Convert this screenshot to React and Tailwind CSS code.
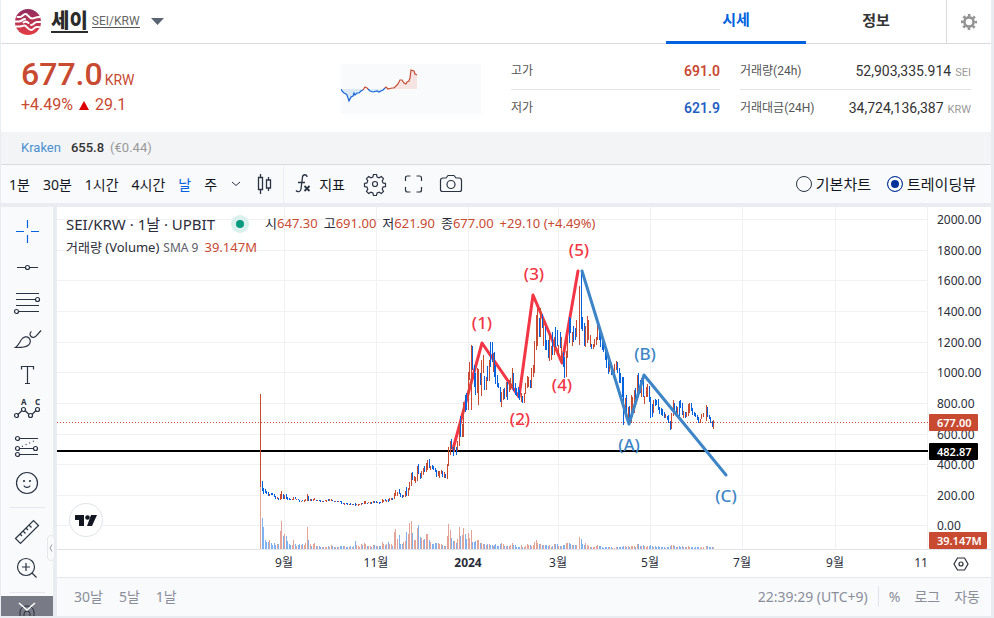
import React, { useState } from 'react'

const UP = '#c84a31'
const DOWN = '#0062df'
const UP_VOLUME = '#e3a396'
const DOWN_VOLUME = '#80b1ef'
const VOLUME_BASE = 549

/** Daily bars: [x, high y, low y, rising (1) or falling (0), volume height]. */
const BARS = [
  [260, 394, 487, 1, 62], [262, 481, 491, 0, 31], [263, 488, 494, 0, 22], [265, 489, 493, 0, 9], [266, 491, 494, 0, 7],
  [268, 492, 496, 0, 7], [269, 494, 496, 1, 9], [271, 493, 495, 0, 6], [272, 493, 495, 0, 4], [274, 494, 497, 0, 6],
  [275, 496, 499, 0, 4], [277, 497, 499, 1, 5], [278, 498, 500, 0, 5], [280, 494, 500, 1, 18], [281, 491, 499, 1, 28],
  [283, 494, 499, 0, 13], [284, 495, 499, 1, 15], [286, 494, 499, 0, 13], [287, 497, 500, 0, 8], [289, 498, 500, 0, 5],
  [290, 499, 500, 0, 4], [292, 499, 500, 1, 4], [293, 497, 500, 1, 9], [295, 497, 499, 0, 5], [296, 499, 500, 1, 3],
  [298, 499, 500, 0, 4], [299, 500, 502, 0, 5], [301, 501, 502, 1, 4], [302, 500, 501, 0, 5], [304, 500, 502, 1, 4],
  [305, 499, 501, 1, 6], [307, 494, 501, 1, 22], [308, 496, 501, 0, 9], [310, 499, 501, 1, 5], [311, 499, 501, 0, 3],
  [313, 499, 501, 1, 5], [314, 498, 500, 1, 6], [316, 500, 501, 0, 3], [317, 500, 501, 1, 3], [319, 500, 501, 0, 3],
  [320, 500, 502, 0, 2], [322, 501, 502, 1, 2], [323, 501, 502, 0, 2], [325, 500, 501, 1, 2], [326, 500, 502, 1, 2],
  [328, 499, 501, 0, 3], [329, 499, 501, 1, 2], [331, 499, 501, 1, 4], [332, 500, 501, 0, 3], [334, 501, 502, 0, 2],
  [335, 501, 502, 1, 2], [337, 501, 502, 0, 2], [338, 501, 502, 1, 2], [340, 501, 502, 0, 3], [341, 501, 504, 0, 3],
  [343, 503, 504, 0, 3], [344, 503, 505, 1, 3], [346, 503, 504, 0, 2], [347, 503, 505, 0, 2], [349, 504, 505, 1, 2],
  [350, 503, 505, 0, 3], [352, 504, 505, 1, 2], [353, 504, 505, 0, 3], [355, 503, 506, 0, 8], [356, 504, 505, 1, 4],
  [358, 504, 506, 1, 3], [359, 504, 505, 1, 2], [361, 503, 505, 1, 5], [362, 503, 504, 0, 4], [364, 501, 504, 1, 6],
  [365, 501, 504, 1, 5], [367, 503, 504, 0, 3], [368, 502, 503, 1, 3], [370, 502, 504, 1, 3], [371, 502, 504, 0, 2],
  [373, 501, 503, 1, 4], [374, 501, 503, 0, 4], [376, 501, 503, 0, 3], [377, 502, 503, 1, 3], [379, 502, 504, 0, 3],
  [380, 502, 503, 0, 3], [382, 499, 503, 1, 7], [383, 500, 502, 1, 5], [385, 499, 501, 0, 4], [386, 500, 502, 1, 5],
  [388, 499, 502, 0, 7], [389, 498, 501, 1, 5], [391, 498, 500, 1, 5], [392, 498, 500, 0, 3], [394, 493, 499, 1, 17],
  [395, 490, 496, 1, 20], [397, 492, 496, 1, 10], [399, 489, 494, 0, 14], [400, 493, 497, 0, 5], [402, 495, 498, 0, 5],
  [403, 495, 497, 1, 7], [405, 491, 497, 1, 8], [406, 487, 496, 0, 17], [408, 488, 496, 1, 15], [409, 482, 490, 1, 26],
  [411, 473, 486, 1, 28], [412, 472, 480, 0, 16], [414, 476, 481, 1, 9], [415, 477, 483, 1, 9], [417, 466, 481, 1, 21],
  [418, 464, 474, 0, 24], [420, 473, 479, 0, 12], [421, 471, 478, 1, 11], [423, 468, 475, 1, 9], [424, 466, 472, 0, 10],
  [426, 463, 472, 1, 15], [427, 460, 470, 1, 15], [429, 459, 468, 0, 9], [430, 466, 470, 1, 7], [432, 465, 469, 0, 5],
  [433, 466, 470, 0, 5], [435, 468, 472, 0, 6], [436, 470, 477, 0, 6], [438, 471, 476, 1, 6], [439, 471, 478, 1, 5],
  [441, 470, 474, 1, 5], [442, 471, 477, 0, 4], [444, 472, 478, 1, 3], [445, 474, 478, 0, 3], [447, 464, 479, 1, 13],
  [448, 447, 466, 1, 25], [450, 441, 455, 1, 19], [451, 439, 449, 0, 11], [453, 447, 456, 0, 8], [454, 445, 452, 1, 8],
  [456, 447, 455, 0, 6], [457, 441, 451, 1, 10], [459, 423, 446, 1, 22], [460, 416, 437, 0, 13], [462, 424, 437, 1, 14],
  [463, 402, 437, 1, 21], [465, 395, 412, 0, 15], [466, 393, 410, 0, 10], [468, 372, 410, 1, 16], [469, 362, 380, 1, 11],
  [471, 345, 410, 1, 19], [472, 346, 370, 0, 7], [474, 365, 387, 0, 7], [475, 373, 395, 0, 8], [477, 368, 393, 1, 9],
  [478, 369, 405, 1, 9], [480, 373, 385, 0, 6], [481, 360, 396, 1, 6], [483, 355, 373, 1, 5], [484, 376, 390, 0, 5],
  [486, 377, 390, 1, 4], [487, 366, 381, 0, 5], [489, 360, 381, 1, 5], [490, 342, 367, 0, 4], [492, 342, 362, 0, 4],
  [493, 353, 372, 1, 3], [494, 352, 377, 0, 4], [495, 365, 384, 0, 5], [497, 375, 387, 0, 3], [498, 383, 388, 0, 3],
  [500, 387, 402, 0, 5], [501, 392, 407, 1, 6], [503, 389, 400, 1, 5], [504, 388, 399, 0, 3], [506, 382, 397, 1, 3],
  [507, 382, 400, 0, 3], [509, 380, 392, 1, 3], [510, 378, 390, 1, 4], [512, 368, 387, 1, 6], [513, 373, 391, 0, 4],
  [515, 383, 395, 0, 4], [516, 388, 396, 0, 2], [518, 387, 398, 0, 2], [519, 390, 400, 0, 2], [521, 393, 402, 1, 4],
  [522, 396, 403, 0, 2], [524, 393, 403, 1, 2], [525, 383, 394, 1, 3], [527, 376, 388, 1, 5], [528, 377, 387, 1, 4],
  [530, 380, 388, 0, 4], [531, 368, 388, 1, 3], [533, 365, 377, 1, 4], [534, 341, 373, 1, 7], [536, 315, 350, 1, 9],
  [537, 308, 346, 1, 6], [539, 318, 337, 0, 5], [540, 308, 337, 1, 5], [542, 314, 328, 0, 4], [543, 318, 346, 1, 4],
  [545, 327, 350, 0, 4], [546, 340, 350, 0, 4], [548, 340, 358, 0, 3], [549, 333, 361, 1, 4], [551, 346, 360, 1, 2],
  [552, 332, 355, 0, 3], [554, 337, 355, 1, 5], [555, 327, 347, 0, 5], [557, 330, 346, 0, 5], [558, 345, 353, 1, 3],
  [560, 332, 348, 0, 3], [561, 337, 363, 1, 3], [563, 352, 367, 0, 4], [564, 357, 378, 0, 4], [566, 351, 377, 1, 6],
  [567, 337, 358, 1, 6], [569, 317, 343, 0, 6], [570, 318, 333, 0, 5], [572, 332, 346, 1, 4], [573, 326, 342, 0, 4],
  [575, 328, 340, 0, 4], [576, 320, 337, 1, 4], [579, 286, 345, 1, 12], [581, 271, 329, 0, 10], [582, 317, 331, 0, 5],
  [584, 323, 346, 0, 4], [585, 326, 347, 1, 6], [587, 316, 343, 1, 4], [588, 320, 340, 1, 3], [590, 335, 347, 1, 2],
  [591, 344, 349, 0, 2], [593, 344, 349, 1, 2], [594, 339, 347, 1, 2], [596, 337, 345, 1, 3], [597, 320, 340, 1, 4],
  [599, 325, 340, 0, 3], [600, 328, 347, 0, 3], [602, 338, 350, 0, 2], [603, 340, 352, 0, 1], [605, 345, 360, 0, 2],
  [606, 350, 368, 0, 2], [608, 353, 374, 0, 2], [609, 360, 372, 1, 2], [611, 364, 375, 0, 2], [612, 366, 374, 1, 1],
  [614, 364, 373, 1, 1], [616, 361, 370, 1, 2], [617, 362, 373, 0, 2], [619, 368, 383, 0, 2], [620, 373, 383, 0, 2],
  [622, 377, 397, 0, 2], [623, 377, 425, 0, 3], [625, 398, 417, 1, 3], [626, 395, 419, 0, 2], [628, 407, 425, 1, 3],
  [629, 406, 424, 0, 2], [631, 395, 423, 1, 3], [632, 397, 417, 1, 3], [634, 390, 413, 1, 3], [635, 388, 407, 0, 2],
  [637, 375, 397, 1, 5], [638, 373, 390, 0, 5], [640, 380, 393, 0, 3], [641, 378, 397, 1, 3], [643, 378, 397, 0, 4],
  [644, 396, 404, 1, 3], [646, 387, 397, 1, 2], [647, 384, 397, 1, 3], [649, 386, 402, 0, 3], [650, 397, 418, 0, 4],
  [652, 404, 417, 0, 3], [653, 400, 413, 1, 2], [655, 399, 406, 0, 3], [656, 400, 405, 0, 2], [658, 399, 410, 0, 3],
  [659, 407, 414, 0, 2], [661, 408, 415, 0, 2], [662, 409, 416, 0, 2], [664, 412, 418, 0, 2], [665, 414, 418, 1, 1],
  [667, 416, 420, 0, 2], [668, 415, 423, 0, 2], [670, 421, 430, 0, 3], [671, 413, 429, 1, 4], [673, 400, 416, 1, 4],
  [674, 403, 413, 0, 3], [676, 406, 415, 0, 2], [677, 407, 417, 1, 2], [679, 401, 416, 0, 3], [680, 400, 408, 0, 2],
  [682, 403, 415, 0, 3], [683, 411, 418, 1, 2], [685, 412, 418, 0, 2], [686, 412, 417, 1, 2], [688, 404, 416, 1, 3],
  [689, 403, 413, 1, 2], [691, 403, 411, 0, 2], [692, 408, 415, 0, 2], [694, 412, 416, 0, 1], [695, 413, 417, 0, 2],
  [697, 415, 420, 0, 2], [698, 417, 423, 0, 2], [700, 419, 423, 1, 1], [701, 414, 419, 1, 2], [703, 413, 417, 1, 2],
  [706, 405, 421, 1, 3], [707, 407, 417, 0, 3], [709, 415, 419, 0, 2], [710, 417, 423, 0, 2], [712, 421, 427, 0, 2],
  [713, 420, 429, 1, 2],
]

const PRICE_TICKS = ['2000.00', '1800.00', '1600.00', '1400.00', '1200.00', '1000.00', '800.00', '600.00', '400.00', '200.00', '0.00']
const PRICE_LINES = [219, 250, 280, 311, 342, 372, 403, 434, 464, 495, 525]

const MONTHS = [
  { x: 284, line: 284, label: '9월' },
  { x: 376, line: 376, label: '11월' },
  { x: 468, line: 468, label: '2024', bold: true },
  { x: 558, line: 558, label: '3월' },
  { x: 650, line: 650, label: '5월' },
  { x: 742, line: 742, label: '7월' },
  { x: 835, line: 835, label: '9월' },
  { x: 921, line: 927, label: '11' },
]

const WAVES = [
  { x: 482, y: 329, label: '(1)', color: '#f23645' },
  { x: 520, y: 425, label: '(2)', color: '#f23645' },
  { x: 534, y: 280, label: '(3)', color: '#f23645' },
  { x: 562, y: 391, label: '(4)', color: '#f23645' },
  { x: 579, y: 256, label: '(5)', color: '#f23645' },
  { x: 629, y: 451, label: '(A)', color: '#3d85c6' },
  { x: 645, y: 360, label: '(B)', color: '#3d85c6' },
  { x: 726, y: 502, label: '(C)', color: '#3d85c6' },
]

/** Joins one-pixel wide bars into a single path. */
function barsPath(bars, top, bottom) {
  return bars.map((b) => `M${b[0]} ${top(b)}h1V${bottom(b)}h-1Z`).join('')
}

function PriceBadge({ y, width, color, children }) {
  return (
    <g>
      <rect x="929" y={y - 9} width={width} height="17" rx="1" fill={color} />
      <text x="937" y={y + 4} fill="#fff" fontWeight="600" className="text-[11px]">
        {children}
      </text>
    </g>
  )
}

function Chart() {
  const rising = BARS.filter((b) => b[3] === 1)
  const falling = BARS.filter((b) => b[3] === 0)

  return (
    <svg
      viewBox="57 207 934 370"
      className="block h-auto w-full text-[12px]"
      role="img"
      aria-label="SEI/KRW 차트"
    >
      <g stroke="#f0f1f2" shapeRendering="crispEdges">
        {PRICE_LINES.map((y) => (
          <line key={y} x1="57" x2="928" y1={y + 0.5} y2={y + 0.5} />
        ))}
        {MONTHS.map((m) => (
          <line key={m.x} x1={m.line + 0.5} x2={m.line + 0.5} y1="207" y2="549" />
        ))}
      </g>

      <g shapeRendering="crispEdges">
        <path d={barsPath(rising, (b) => VOLUME_BASE - b[4], () => VOLUME_BASE)} fill={UP_VOLUME} />
        <path d={barsPath(falling, (b) => VOLUME_BASE - b[4], () => VOLUME_BASE)} fill={DOWN_VOLUME} />
      </g>
      <line x1="57" x2="928" y1="451" y2="451" stroke="#000" strokeWidth="2" />
      <line x1="57" x2="928" y1="422.5" y2="422.5" stroke={UP} strokeDasharray="1 2" shapeRendering="crispEdges" />

      {/* Elliott wave: five up, three down */}
      <path
        d="M453 449L482 343L519 397L533 295L562 363L578 271"
        fill="none"
        stroke="#f23645"
        strokeWidth="3"
        strokeLinejoin="round"
        strokeLinecap="round"
      />
      <g shapeRendering="crispEdges">
        <path d={barsPath(rising, (b) => b[1], (b) => b[2])} fill={UP} />
        <path d={barsPath(falling, (b) => b[1], (b) => b[2])} fill={DOWN} />
      </g>
      <path
        d="M582 271L629 424L644 375L726 475"
        fill="none"
        stroke="#3d85c6"
        strokeWidth="3"
        strokeLinejoin="round"
        strokeLinecap="round"
      />
      {WAVES.map((w) => (
        <text key={w.label} x={w.x} y={w.y} fill={w.color} textAnchor="middle" fontWeight="500" className="text-[17px]">
          {w.label}
        </text>
      ))}

      {/* TradingView mark */}
      <circle cx="86" cy="520" r="16.5" fill="#fff" stroke="#e0e3eb" />
      <path d="M75 515h9v11h-5v-6h-4ZM91 515h6l-5 11h-5Z" fill="#131722" />
      <circle cx="87.5" cy="517.5" r="2.3" fill="#131722" />

      <path d="M57 549.5H991" stroke="#e0e3eb" shapeRendering="crispEdges" />
      <g fill="#2a2e39">
        {PRICE_TICKS.map((p, i) => (
          <text key={p} x="937" y={PRICE_LINES[i] + 5}>
            {p}
          </text>
        ))}
        {MONTHS.map((m) => (
          <text key={m.x} x={m.x} y="567" textAnchor="middle" fontWeight={m.bold ? 700 : 400}>
            {m.label}
          </text>
        ))}
      </g>
      <PriceBadge y={423} width={49} color={UP}>677.00</PriceBadge>
      <PriceBadge y={452} width={49} color="#000">482.87</PriceBadge>
      <PriceBadge y={541} width={58} color={UP}>39.147M</PriceBadge>
      <g fill="none" stroke="#2a2e39" strokeWidth="1.2">
        <path d="M957.500 558h7l3.500 6-3.500 6h-7l-3.500-6Z" />
        <circle cx="961" cy="564" r="2" />
      </g>
    </svg>
  )
}

function Sparkline() {
  return (
    <svg viewBox="0 0 140 50" className="h-[50px] w-[140px] shrink-0 bg-[#f9fafc]" aria-hidden="true">
      <path d="M0 25L2 29L6 31L9 37L12 31L16 29L20 27L24 25ZM27 25L30 27L35 28L40 27L44 25Z" fill="#dbe9f6" />
      <path d="M46 25L54 24L57 21L60 16L65 20L69 17L70 6L73 8L75 11L76 11V25Z" fill="#f6e4e2" />
      <g fill="none" strokeWidth="1.2">
        <path d="M0 25L1 27L3 29L5 30L6 31L8 37L10 33L12 32L13 29L14 31L16 29L18 29L20 27L22 26M27 25L29 27L32 28L36 27L38 28L40 27L42 26L44 24" stroke="#1565d8" />
        <path d="M22 26L24 23L26 24L27 25M44 24L45 23L47 25L51 24L53 24L55 22L57 20L59 16L61 16L63 19L65 20L66 18L68 17L69 14L70 6L73 7L74 10L76 11" stroke={UP} />
      </g>
    </svg>
  )
}

function CoinLogo() {
  return (
    <svg viewBox="0 0 26 26" className="h-[26px] w-[26px]" aria-hidden="true">
      <defs>
        <linearGradient id="coin" x1="0" y1="0" x2="0" y2="1">
          <stop offset="0" stopColor="#8e2c62" />
          <stop offset="1" stopColor="#e63d42" />
        </linearGradient>
      </defs>
      <circle cx="13" cy="13" r="13" fill="url(#coin)" />
      <g fill="none" stroke="#fff" strokeWidth="2" strokeLinecap="round">
        <path d="M2.500 8h2.500c2.500 0 3-3 5.500-3s3.500 4.500 6.500 4.500 2.500-1.500 7.500-1.500" />
        <path d="M0 12.500h4c3 0 3.500-2.500 6-2.500M8.500 13.500c2-1.500 3.500-1 5 .500M16 16c3 0 3-3 6-3h4" />
        <path d="M1 17.500h4c2.500 0 2.500-1 4.500-1s3.500 4.500 6.500 4.500 3-3 5.500-3h2.500" />
      </g>
    </svg>
  )
}

function Icon({ children }) {
  return (
    <svg viewBox="0 0 28 28" className="h-7 w-7 overflow-visible" fill="none" stroke="#2a3342" strokeWidth="1.2" aria-hidden="true">
      {children}
    </svg>
  )
}

const GEAR_PATH =
  'M12.500 4.500h3l.600 2.500 2 .800 2.200-1.300 2.200 2.200-1.300 2.200.800 2 2.500.600v3l-2.500.600-.800 2 1.300 2.200-2.200 2.200-2.200-1.300-2 .800-.600 2.500h-3l-.600-2.500-2-.800-2.200 1.300-2.200-2.200 1.300-2.200-.800-2-2.500-.600v-3l2.500-.600.800-2-1.300-2.200 2.200-2.200 2.200 1.300 2-.800Z'

const DRAW_TOOLS = [
  {
    label: '크로스',
    icon: <path d="M14.500 3v8M14.500 18v8M3 14.500h8M18 14.500h8" stroke="#0062df" />,
  },
  {
    label: '추세선',
    icon: (
      <>
        <path d="M4 14.500h8.500M16.500 14.500H25" />
        <circle cx="14.5" cy="14.5" r="2" />
      </>
    ),
  },
  {
    label: '피보나치',
    icon: (
      <>
        <path d="M3 4.500h23M3 10.500h19.500M3 16.500h23M5.500 22.500H26" />
        <circle cx="24.5" cy="10.5" r="2" />
        <circle cx="3.5" cy="22.5" r="2" />
      </>
    ),
  },
  {
    label: '브러시',
    icon: (
      <path d="M2.500 22.500c3-2 4-5.500 6-8 2-2.800 5.500-3.500 7.500-1.500s1.800 5.500-1 7.500c-3 2.200-8 2-12.500 2ZM18.500 6.500c-1.800 1-2 3.500-.500 5s4 1 5.500-.800L28 5.500" />
    ),
  },
  {
    label: '텍스트',
    icon: <path d="M8.500 8.500v-3h12v3M14.500 5.500v17M12 22.500h5" />,
  },
  {
    label: '패턴',
    icon: (
      <>
        <path d="m4.500 18 4.500-4.500M12 13.500l4 4M19 17.500l4-4" />
        <circle cx="3.5" cy="18.5" r="2" />
        <circle cx="10.5" cy="12.5" r="2" />
        <circle cx="17.5" cy="18.5" r="2" />
        <circle cx="24.5" cy="12.5" r="2" />
        <text x="8" y="8" fontSize="8" fontWeight="700" fill="#2a3342" stroke="none">A</text>
        <text x="22" y="8" fontSize="8" fontWeight="700" fill="#2a3342" stroke="none">C</text>
      </>
    ),
  },
  {
    label: '예측',
    icon: (
      <>
        <path d="M6.500 5.500H25M6.500 15.500h14M6.500 21.500H25" />
        <path d="M9 13.500 23 7" strokeDasharray="1 3" />
        <circle cx="4.5" cy="5.5" r="2" />
        <circle cx="4.5" cy="15.5" r="2" />
        <circle cx="22.5" cy="15.5" r="2" />
        <circle cx="4.5" cy="21.5" r="2" />
      </>
    ),
  },
  {
    label: '아이콘',
    icon: (
      <>
        <circle cx="14" cy="14" r="10.5" />
        <path d="M11 16.500c.500 2.500 5.500 2.500 6 0" />
        <path d="M11 11v2M17 11v2" strokeWidth="1.6" />
      </>
    ),
  },
]

const ZOOM_TOOLS = [
  {
    label: '자',
    icon: <path d="M2.500 20.500 20.500 2.500l5 5-18 18ZM7 16l2 2M10 13l2.500 2.500M13 10l2 2M16 7l2.500 2.500" />,
  },
  {
    label: '확대',
    icon: (
      <>
        <circle cx="13" cy="13" r="8.5" />
        <path d="M13 9v8M9 13h8M19 19l4.500 4.500" />
      </>
    ),
  },
]

function ToolButton({ tool }) {
  return (
    <button type="button" aria-label={tool.label} className="flex h-9 w-full items-center justify-center">
      <Icon>{tool.icon}</Icon>
    </button>
  )
}

function Header() {
  return (
    <header className="flex h-11 border-b border-[#d9dbdf]">
      <div className="flex flex-1 items-center pl-[14px]">
        <CoinLogo />
        <a href="#coin" className="ml-[10px] border-b-2 border-[#2b2b2b] text-[20px] leading-5 font-black text-[#2b2b2b]">
          세이
        </a>
        <a href="#pair" className="ml-1 border-b border-[#555] text-[12px] leading-3 text-[#666]">
          SEI/KRW
        </a>
        <button type="button" aria-label="코인 선택" className="ml-[11px]">
          <svg viewBox="0 0 13 7" className="h-[7px] w-[13px]" fill="#5b6473">
            <path d="M0 0h13L6.500 7Z" />
          </svg>
        </button>
      </div>
      <nav className="flex text-[15px] font-bold">
        <a href="#price" className="-mb-px flex w-[140px] items-center justify-center border-b-3 border-[#0062df] text-[#0062df]">
          시세
        </a>
        <a href="#info" className="flex w-[140px] items-center justify-center text-[#333]">
          정보
        </a>
      </nav>
      <button type="button" aria-label="설정" className="flex w-[45px] items-center justify-center border-l border-[#d9dbdf]">
        <svg viewBox="0 0 16 16" className="h-4 w-4" fill="none" stroke="#929292">
          <circle cx="8" cy="8" r="4.6" strokeWidth="2.6" />
          <circle cx="8" cy="8" r="6.8" strokeWidth="2.4" strokeDasharray="2.6 2.74" strokeDashoffset="1.3" />
        </svg>
      </button>
    </header>
  )
}

function Stat({ label, value, unit, valueClass }) {
  return (
    <div className="box-content flex h-9 items-center justify-between not-last:border-b not-last:border-[#e1e3e8]">
      <dt className="text-[12px] text-[#555]">{label}</dt>
      <dd className={valueClass}>
        {value}
        {unit && <span className="ml-1 text-[11px] text-[#999]">{unit}</span>}
      </dd>
    </div>
  )
}

function Summary() {
  return (
    <section className="flex h-[88px] pr-5 pl-5">
      <div className="w-[320px] pt-[10px] text-[#c84a31]">
        <p className="flex h-10 items-baseline text-[32px] leading-[40px] font-medium">
          677.0
          <span className="ml-[2px] text-[14px] leading-4 font-normal">KRW</span>
        </p>
        <p className="flex h-[22px] items-center text-[16px]">
          +4.49%
          <svg viewBox="0 0 10 9" className="mx-[6px] h-[9px] w-[10px]" fill="#dd0000">
            <path d="M5 0l5 9H0Z" />
          </svg>
          29.1
        </p>
      </div>
      <div className="pt-5">
        <Sparkline />
      </div>
      <dl className="ml-[30px] w-[209px] pt-[9px]">
        <Stat label="고가" value="691.0" valueClass="text-[14px] font-semibold text-[#c84a31]" />
        <Stat label="저가" value="621.9" valueClass="text-[14px] font-semibold text-[#1f5fc4]" />
      </dl>
      <dl className="ml-5 flex-1 pt-[9px]">
        <Stat label="거래량(24h)" value="52,903,335.914" unit="SEI" valueClass="text-[14px] text-[#333]" />
        <Stat label="거래대금(24H)" value="34,724,136,387" unit="KRW" valueClass="text-[14px] text-[#333]" />
      </dl>
    </section>
  )
}

function TopBar() {
  const [chart, setChart] = useState('tradingview')
  const radio =
    'h-4 w-4 appearance-none rounded-full border border-[#2a3342] checked:border-[#0b3a9b] checked:bg-[#003399] checked:shadow-[inset_0_0_0_3px_white]'

  return (
    <div className="flex h-[38px] items-center bg-[#f9fafc] text-[14px] text-[#131722]">
      <div className="flex h-full items-center gap-[13px] border-r border-[#ebedf2] pr-[10px] pl-2">
        <button type="button">1분</button>
        <button type="button">30분</button>
        <button type="button">1시간</button>
        <button type="button">4시간</button>
        <button type="button" className="text-[#0062df]">날</button>
        <button type="button">주</button>
        <button type="button" aria-label="시간 간격">
          <svg viewBox="0 0 12 6" className="h-[6px] w-3" fill="none" stroke="#2a3342">
            <path d="M2 1l4 3.500L10 1" />
          </svg>
        </button>
        <button type="button" aria-label="캔들">
          <svg viewBox="0 0 18 20" className="h-5 w-[18px]" fill="none" stroke="#2a3342" strokeWidth="1.3">
            <path d="M3.500 3.500h4v12h-4ZM5.500 0v3.500M5.500 15.500V20M11.500 6h4v8h-4ZM13.500 3v3M13.500 14v3" />
          </svg>
        </button>
      </div>
      <button type="button" className="ml-[11px] flex items-center gap-2">
        <svg viewBox="0 0 16 20" className="h-5 w-4" fill="none" stroke="#2a3342" strokeWidth="1.3">
          <path d="M12 3c0-3-4-3-4.500 0L6 15c-.500 3-3.500 3.500-5 1.500M3 8.500h7" />
          <path d="M9.500 12l5 5M14.500 12l-5 5" strokeWidth="1.8" />
        </svg>
        지표
      </button>
      <button type="button" aria-label="차트 설정" className="ml-4">
        <Icon>
          <path d={GEAR_PATH} />
          <circle cx="14" cy="14" r="2.5" />
        </Icon>
      </button>
      <button type="button" aria-label="전체 화면" className="ml-[10px]">
        <Icon>
          <path d="M6.500 11V8q0-2 2-2h3M17.500 6h3q2 0 2 2v3M22.500 17v3q0 2-2 2h-3M11.500 22h-3q-2 0-2-2v-3" />
        </Icon>
      </button>
      <button type="button" aria-label="스냅샷" className="ml-[10px]">
        <Icon>
          <path d="M6 8h3l2-2.500h6L19 8h3q2.500 0 2.500 2.500v9q0 2-2 2h-17q-2 0-2-2v-9Q3.500 8 6 8Z" />
          <circle cx="14" cy="14.5" r="4" />
        </Icon>
      </button>
      <div className="mr-[15px] ml-auto flex gap-4 text-[15px] leading-5">
        <label className="flex items-center gap-1">
          <input type="radio" name="chart" className={radio} checked={chart === 'basic'} onChange={() => setChart('basic')} />
          기본차트
        </label>
        <label className="flex items-center gap-1">
          <input type="radio" name="chart" className={radio} checked={chart === 'tradingview'} onChange={() => setChart('tradingview')} />
          트레이딩뷰
        </label>
      </div>
    </div>
  )
}

function SideBar() {
  return (
    <aside className="relative flex w-[52px] shrink-0 flex-col bg-[#f9fafc] pt-[6px]">
      {DRAW_TOOLS.map((t) => (
        <ToolButton key={t.label} tool={t} />
      ))}
      <hr className="mx-2 mt-[6px] mb-[6px] border-[#e6e8ee]" />
      {ZOOM_TOOLS.map((t) => (
        <ToolButton key={t.label} tool={t} />
      ))}
      <hr className="mx-2 mt-[6px] border-[#e6e8ee]" />
      <button type="button" aria-label="더 보기" className="mt-auto flex h-5 items-end justify-center overflow-hidden bg-[#787b86]">
        <svg viewBox="0 0 20 14" className="h-[14px] w-5" fill="none">
          <path d="M3 14V10a7 6 0 0 1 14 0v4M7 14v-2a3 3 0 0 1 6 0v2" stroke="#2a2e39" />
          <path d="M2 1l8 7 8-7" stroke="#fff" strokeWidth="1.6" />
        </svg>
      </button>
      <button
        type="button"
        aria-label="도구 숨기기"
        className="absolute top-[328px] -right-[2px] flex h-[26px] w-2 items-center justify-center rounded border border-[#e6e8ee] bg-[#f9fafc]"
      >
        <svg viewBox="0 0 4 8" className="h-2 w-1" fill="none" stroke="#9598a1">
          <path d="M3 .500L1 4l2 3.500" />
        </svg>
      </button>
    </aside>
  )
}

function Ohlc({ label, value }) {
  return (
    <span>
      {label}
      <span className="text-[#c84a31]">{value}</span>
    </span>
  )
}

function Legend() {
  return (
    <div className="absolute top-[7px] left-[9px] text-[#2a2e39]">
      <div className="flex h-5 items-center">
        <h1 className="text-[15px]">SEI/KRW · 1날 · UPBIT</h1>
        <span className="mx-4 flex h-[18px] w-[18px] items-center justify-center rounded-full bg-[#daf0ec]">
          <span className="h-2 w-2 rounded-full bg-[#089981]" />
        </span>
        <p className="flex gap-[6px] text-[13px]">
          <Ohlc label="시" value="647.30" />
          <Ohlc label="고" value="691.00" />
          <Ohlc label="저" value="621.90" />
          <Ohlc label="종" value="677.00" />
          <span className="text-[#c84a31]">+29.10 (+4.49%)</span>
        </p>
      </div>
      <p className="mt-1 flex h-5 items-center text-[13px]">
        거래량 (Volume)
        <span className="ml-1 text-[12px] text-[#5d606b]">SMA 9</span>
        <span className="ml-[6px] text-[#c84a31]">39.147M</span>
      </p>
    </div>
  )
}

function BottomBar() {
  return (
    <footer className="flex h-[39px] items-center border-t border-[#e6e8ee] bg-[#f9fafc] pr-[11px] pb-px pl-[17px] text-[14px] text-[#8a8e99]">
      <div className="flex gap-4">
        <button type="button">30날</button>
        <button type="button">5날</button>
        <button type="button">1날</button>
      </div>
      <button type="button" className="ml-auto">22:39:29 (UTC+9)</button>
      <div className="ml-[10px] flex gap-[14px] border-l border-[#e0e3eb] pl-[10px]">
        <button type="button">%</button>
        <button type="button">로그</button>
        <button type="button">자동</button>
      </div>
    </footer>
  )
}

export default function App() {
  return (
    <div className="min-h-screen bg-[#e9ecf1] pr-[3px] pb-[2px] pl-px font-['Roboto','Noto_Sans_CJK_KR',sans-serif]">
      <div className="bg-white">
        <Header />
        <Summary />
        <p className="flex h-[33px] items-center border-b border-[#d9dbdf] bg-[#f3f4f6] pl-5 text-[13px]">
          <a href="#kraken" className="text-[#4a90d0]">Kraken</a>
          <span className="ml-[10px] font-medium text-[#333]">655.8</span>
          <span className="ml-[6px] text-[#999]">(€0.44)</span>
        </p>
      </div>
      <div className="font-['Noto_Sans','Noto_Sans_CJK_KR',sans-serif]">
        <TopBar />
        <div className="mt-1 flex gap-1">
          <SideBar />
          <main className="relative min-w-0 flex-1 bg-white">
            <Chart />
            <Legend />
            <BottomBar />
          </main>
        </div>
      </div>
    </div>
  )
}
